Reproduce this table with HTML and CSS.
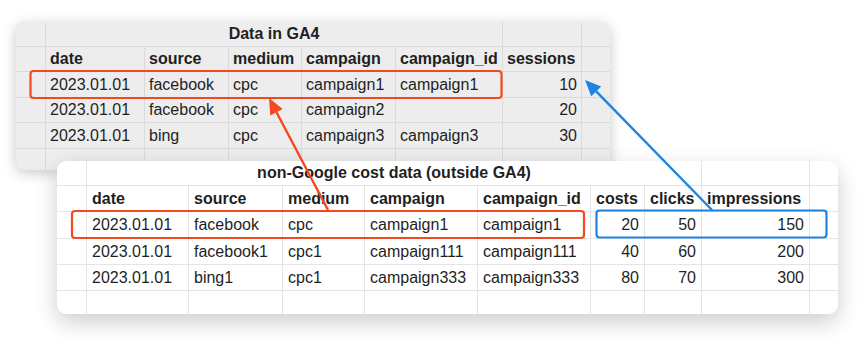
FILE: index.html
```html
<!DOCTYPE html>
<html>
<head>
<meta charset="utf-8">
<link rel="stylesheet" href="styles.css">
</head>
<body>
<div class="stage">
  <div class="card card-ga4">
    <div class="grid grid-ga4">
      <div class="c"></div><div class="c title t-ga4">Data in GA4</div><div class="c"></div><div class="c"></div>
      <div class="c"></div><div class="c h">date</div><div class="c h">source</div><div class="c h">medium</div><div class="c h">campaign</div><div class="c h">campaign_id</div><div class="c h">sessions</div><div class="c"></div>
      <div class="c"></div><div class="c">2023.01.01</div><div class="c">facebook</div><div class="c">cpc</div><div class="c">campaign1</div><div class="c">campaign1</div><div class="c n">10</div><div class="c"></div>
      <div class="c"></div><div class="c">2023.01.01</div><div class="c">facebook</div><div class="c">cpc</div><div class="c">campaign2</div><div class="c"></div><div class="c n">20</div><div class="c"></div>
      <div class="c"></div><div class="c">2023.01.01</div><div class="c">bing</div><div class="c">cpc</div><div class="c">campaign3</div><div class="c">campaign3</div><div class="c n">30</div><div class="c"></div>
      <div class="c"></div><div class="c"></div><div class="c"></div><div class="c"></div><div class="c"></div><div class="c"></div><div class="c"></div><div class="c"></div>
    </div>
  </div>

  <div class="card card-cost">
    <div class="grid grid-cost">
      <div class="c"></div><div class="c title t-cost">non-Google cost data (outside GA4)</div><div class="c"></div><div class="c"></div>
      <div class="c"></div><div class="c h">date</div><div class="c h">source</div><div class="c h">medium</div><div class="c h">campaign</div><div class="c h">campaign_id</div><div class="c h">costs</div><div class="c h">clicks</div><div class="c h">impressions</div><div class="c"></div>
      <div class="c"></div><div class="c">2023.01.01</div><div class="c">facebook</div><div class="c">cpc</div><div class="c">campaign1</div><div class="c">campaign1</div><div class="c n">20</div><div class="c n">50</div><div class="c n">150</div><div class="c"></div>
      <div class="c"></div><div class="c">2023.01.01</div><div class="c">facebook1</div><div class="c">cpc1</div><div class="c">campaign111</div><div class="c">campaign111</div><div class="c n">40</div><div class="c n">60</div><div class="c n">200</div><div class="c"></div>
      <div class="c"></div><div class="c">2023.01.01</div><div class="c">bing1</div><div class="c">cpc1</div><div class="c">campaign333</div><div class="c">campaign333</div><div class="c n">80</div><div class="c n">70</div><div class="c n">300</div><div class="c"></div>
      <div class="c"></div><div class="c"></div><div class="c"></div><div class="c"></div><div class="c"></div><div class="c"></div><div class="c"></div><div class="c"></div><div class="c"></div><div class="c"></div>
    </div>
  </div>

  <svg class="overlay" width="859" height="343" viewBox="0 0 859 343">
    <rect x="30.5" y="71" width="471" height="27" rx="3" fill="none" stroke="#f4491f" stroke-width="2.2"/>
    <rect x="72" y="211" width="512" height="27" rx="3" fill="none" stroke="#f4491f" stroke-width="2.2"/>
    <rect x="596.5" y="210.5" width="230" height="27" rx="3" fill="none" stroke="#1e84e4" stroke-width="2.2"/>
    <line x1="328" y1="210" x2="276.5" y2="112.2" stroke="#f4491f" stroke-width="2.4"/>
    <polygon points="269,98 282.7,108.9 270.3,115.4" fill="#f4491f"/>
    <line x1="712" y1="210" x2="596.2" y2="91.4" stroke="#1e84e4" stroke-width="2.4"/>
    <polygon points="585,80 601.2,86.5 591.2,96.3" fill="#1e84e4"/>
  </svg>
</div>
</body>
</html>
```

FILE: styles.css
```css
* { box-sizing: border-box; }
html, body { margin: 0; padding: 0; background: #ffffff; }
body {
  font-family: "Liberation Sans", Arial, Helvetica, sans-serif;
  font-size: 16px;
  color: #1f1f1f;
}
.stage {
  position: relative;
  width: 859px;
  height: 343px;
  overflow: hidden;
  padding: 22px 0 0 16px;
}
.card {
  border-radius: 9px;
  overflow: hidden;
}
.card-ga4 {
  width: 594px;
  height: 148px;
  background: #dadada;
  box-shadow: 0 3px 14px rgba(0, 0, 0, 0.22);
}
.card-cost {
  position: absolute;
  left: 57px;
  top: 161px;
  width: 781px;
  height: 153px;
  background: #e4e4e4;
  box-shadow: 0 8px 22px rgba(0, 0, 0, 0.2);
}
.grid {
  display: grid;
  gap: 1px;
  width: 100%;
  height: 100%;
}
.grid-ga4 {
  grid-template-columns: 29px 98px 83px 72px 93px 106px 78px 28px;
  grid-template-rows: 24px 24px 25px 24px 25px 21px;
}
.grid-cost {
  grid-template-columns: 29px 101px 93px 81px 112px 112px 53px 56px 107px 28px;
  grid-template-rows: 24px 25px 26px 25px 25px 23px;
}
.grid-ga4 .c { background: #ededed; padding: 0 4px; }
.grid-cost .c { background: #ffffff; padding: 0 5px; }
.c {
  display: flex;
  align-items: center;
  white-space: nowrap;
  overflow: visible;
  line-height: 1;
}
.h, .title { font-weight: bold; }
.title { justify-content: center; }
.t-ga4 { grid-column: 2 / 7; }
.t-cost { grid-column: 2 / 9; }
.n { justify-content: flex-end; }
.overlay {
  position: absolute;
  left: 0;
  top: 0;
}
```
